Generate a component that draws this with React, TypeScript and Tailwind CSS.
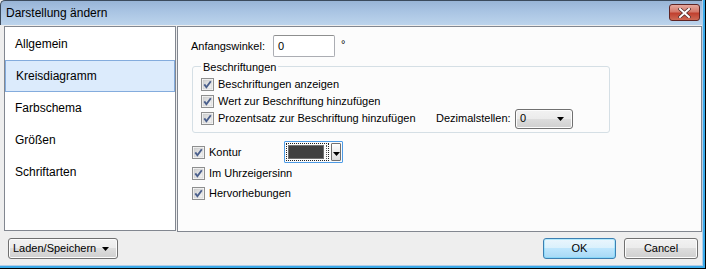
import { ReactNode } from 'react';

const font = { fontFamily: '"Liberation Sans", Arial, sans-serif' };

function CheckBox() {
  return (
    <svg width="13" height="13" viewBox="0 0 13 13" className="shrink-0">
      <defs>
        <linearGradient id="cbfill" x1="0" y1="0" x2="1" y2="1">
          <stop offset="0" stopColor="#cfd0d0" />
          <stop offset="1" stopColor="#f6f6f6" />
        </linearGradient>
      </defs>
      <rect x="0.5" y="0.5" width="12" height="12" fill="#fff" stroke="#8e8f8f" />
      <rect x="2" y="2" width="9" height="9" fill="url(#cbfill)" stroke="#c6c6c6" strokeWidth="0.6" />
      <path d="M3.3 6.4 L5.4 9.2 L9.8 3.2" fill="none" stroke="#4a5f8c" strokeWidth="1.9" />
    </svg>
  );
}

function CheckRow({
  label,
  children,
  className,
  labelClass,
}: {
  label: string;
  children?: ReactNode;
  className?: string;
  labelClass?: string;
}) {
  return (
    <div className={`flex items-center ${className ?? ''}`}>
      <CheckBox />
      <span className={`ml-[4px] shrink-0 ${labelClass ?? ''}`}>{label}</span>
      {children}
    </div>
  );
}

function Arrow() {
  return (
    <svg width="7" height="4" viewBox="0 0 7 4">
      <path d="M0 0 H7 L3.5 4 Z" fill="#000" />
    </svg>
  );
}

function Button({ children, primary, className }: { children: ReactNode; primary?: boolean; className?: string }) {
  return (
    <div
      className={`flex h-[21px] items-center rounded-[3px] border text-[11px] text-black ${
        primary
          ? 'border-[#3c7fb1] bg-[linear-gradient(#eaf6fd_0%,#d9f0fc_50%,#bee6fd_50%,#a7d9f5_100%)] shadow-[inset_0_0_0_1px_#48d2ff55]'
          : 'border-[#707070] bg-[linear-gradient(#f2f2f2_0%,#ebebeb_50%,#dddddd_50%,#cfcfcf_100%)] shadow-[inset_0_0_0_1px_#fcfcfc]'
      } ${className ?? ''}`}
    >
      {children}
    </div>
  );
}

const items = ['Allgemein', 'Kreisdiagramm', 'Farbschema', 'Größen', 'Schriftarten'];

export default function App() {
  return (
    <div className="h-[269px] w-[706px] overflow-hidden bg-[#eeeeee]" style={font}>
      <div className="flex h-full flex-col border-r border-b border-r-black border-b-black">
        <div className="flex h-full flex-col border-r-2 border-b-2 border-[#3aa9e8]">
          <div className="flex h-full flex-col border-r border-b border-[#b3cde8]">
            {/* Title bar */}
            <div className="flex h-[25px] shrink-0 items-center justify-between rounded-tl-[5px] border-t border-l border-[#3b4a5c] bg-[linear-gradient(#98b4d6,#a8c3e2_40%,#bcd4ec)] pl-[5px] pr-[2px]">
              <span className="text-[12px] text-black">Darstellung ändern</span>
              <div className="mb-[1px] flex h-[17px] w-[31px] items-center justify-center rounded-[3px] border border-[#5e2424] bg-[linear-gradient(#e5a99f,#d4786a_45%,#c1402f_55%,#cd6a55)]">
                <svg width="13" height="10" viewBox="0 0 13 10">
                  <path d="M2 1 L11 9 M11 1 L2 9" stroke="#4c2a28" strokeWidth="3.4" strokeLinecap="square" />
                  <path d="M2 1 L11 9 M11 1 L2 9" stroke="#ffffff" strokeWidth="2" strokeLinecap="square" />
                </svg>
              </div>
            </div>

            {/* Body */}
            <div className="flex pt-[1px] pl-[4px]">
              {/* Left list */}
              <div className="h-[205px] w-[172px] shrink-0 border border-[#828790] bg-white pt-[1px] text-[12px] text-black">
                {items.map((item) => (
                  <div
                    key={item}
                    className={`flex h-[32px] items-center pl-[10px] ${
                      item === 'Kreisdiagramm' ? 'border border-[#84acdd] bg-[#dcebfc] pl-[9px]' : ''
                    }`}
                  >
                    {item}
                  </div>
                ))}
              </div>

              {/* Right panel */}
              <div className="ml-[1px] h-[206px] w-[526px] border border-[#828790] bg-[#fcfcfc] text-[11px] text-black">
                <div className="flex items-center pt-[8px] pl-[13px]">
                  <span className="w-[82px]">Anfangswinkel:</span>
                  <div className="h-[22px] w-[62px] rounded-[2px] border border-[#abadb3] border-t-[#8e8f8f] bg-white pt-[2px] pl-[4px]">
                    0
                  </div>
                  <span className="ml-[6px] -mt-[4px]">°</span>
                </div>

                {/* Group box */}
                <div className="relative mt-[9px] ml-[14px] h-[67px] w-[418px] rounded-[3px] border border-[#d5dfe5] pt-[9px] pl-[8px]">
                  <span className="absolute -top-[8px] left-[8px] bg-[#fcfcfc] px-[2px]">Beschriftungen</span>
                  <CheckRow label="Beschriftungen anzeigen" className="h-[17px]" />
                  <CheckRow label="Wert zur Beschriftung hinzufügen" className="h-[17px]" />
                  <CheckRow label="Prozentsatz zur Beschriftung hinzufügen" labelClass="w-[218px]" className="h-[17px]">
                    <span className="w-[79px] shrink-0">Dezimalstellen:</span>
                    <div className="flex h-[20px] w-[58px] items-center justify-between rounded-[3px] border border-[#707070] bg-[linear-gradient(#f2f2f2_0%,#ebebeb_50%,#dddddd_50%,#cfcfcf_100%)] pr-[8px] pl-[4px] shadow-[inset_0_0_0_1px_#fcfcfc]">
                      <span>0</span>
                      <Arrow />
                    </div>
                  </CheckRow>
                </div>

                <CheckRow label="Kontur" labelClass="w-[75px]" className="mt-[8px] h-[22px] pl-[14px]">
                  <div className="flex h-[22px] w-[59px] items-center rounded-[1px] border border-[#4d9be6] p-[1px]">
                    <div className="flex h-full flex-1 items-center border border-dotted border-[#222] p-[1px]">
                      <div className="h-full w-[36px] border border-[#707070] bg-[#404040]" />
                      <div className="ml-[2px] h-full border-l border-dotted border-[#555]" />
                    </div>
                    <div className="ml-[2px] flex h-full w-[13px] flex-col items-center justify-end rounded-[1px] border border-[#707070] bg-[linear-gradient(#ffffff,#dcdcdc)] pb-[4px]">
                      <Arrow />
                    </div>
                  </div>
                </CheckRow>
                <CheckRow label="Im Uhrzeigersinn" className="h-[20px] pl-[14px]" />
                <CheckRow label="Hervorhebungen" className="h-[20px] pl-[14px]" />
              </div>
            </div>

            {/* Bottom bar */}
            <div className="flex flex-1 items-start pt-[6px] pl-[8px] pr-[4px]">
              <Button className="w-[110px] justify-between pr-[8px] pl-[4px]">
                <span>Laden/Speichern</span>
                <Arrow />
              </Button>
              <div className="flex-1" />
              <Button primary className="w-[73px] justify-center">
                OK
              </Button>
              <Button className="ml-[8px] w-[74px] justify-center">Cancel</Button>
            </div>
          </div>
        </div>
      </div>
    </div>
  );
}
